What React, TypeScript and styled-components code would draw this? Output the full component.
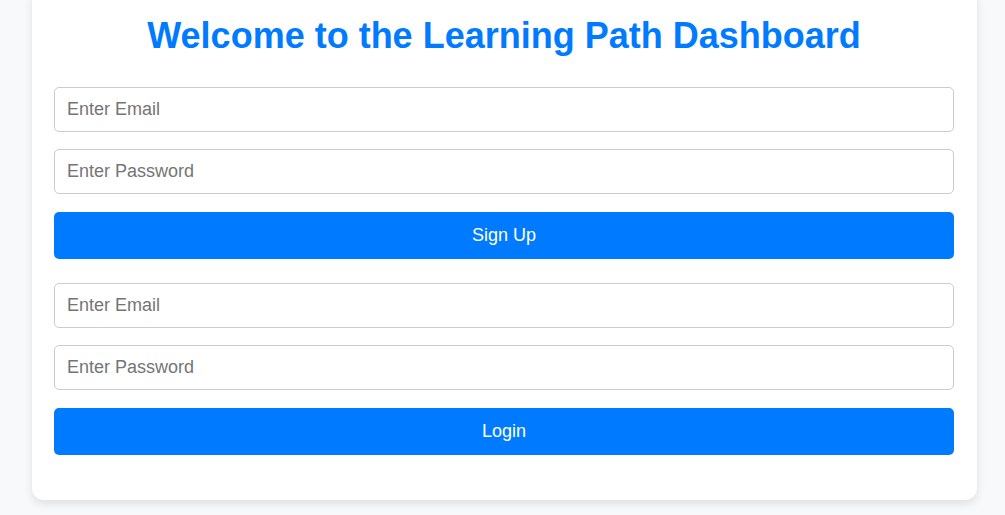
import React from "react";
import styled, { createGlobalStyle } from "styled-components";

const GlobalStyle = createGlobalStyle`
  html, body {
    margin: 0;
    padding: 0;
    background: #f8f9fa;
    font-family: "Liberation Sans", Arial, sans-serif;
  }
`;

const Page = styled.div`
  display: flex;
  justify-content: center;
  padding: 0 28px 0 32px;
  min-height: 515px;
  box-sizing: border-box;
  overflow: hidden;
`;

const Card = styled.div`
  width: 945px;
  box-sizing: border-box;
  margin-top: -12px;
  align-self: flex-start;
  background: #ffffff;
  border-radius: 12px;
  box-shadow: 0 4px 10px rgba(0, 0, 0, 0.1);
  padding: 27px 23px 21px 22px;
`;

const Title = styled.h1`
  margin: 0 0 31px;
  text-align: center;
  color: #007bff;
  font-size: 36px;
  font-weight: bold;
  line-height: 41px;
`;

const Form = styled.form`
  display: flex;
  flex-direction: column;
  gap: 17px;
  margin-bottom: 24px;
`;

const Input = styled.input`
  height: 45px;
  box-sizing: border-box;
  padding: 0 12px;
  border: 1px solid #cccccc;
  border-radius: 5px;
  font-family: "Liberation Sans", Arial, sans-serif;
  font-size: 18px;
  color: #333;
  outline: none;
  &::placeholder {
    color: #757575;
  }
`;

const Button = styled.button`
  height: 47px;
  margin-top: 1px;
  border: none;
  border-radius: 5px;
  background: #007bff;
  color: #ffffff;
  font-family: "Liberation Sans", Arial, sans-serif;
  font-size: 18px;
  cursor: pointer;
`;

function AuthForm({ label }: { label: string }) {
  return (
    <Form onSubmit={(e) => e.preventDefault()}>
      <Input type="email" placeholder="Enter Email" />
      <Input type="password" placeholder="Enter Password" />
      <Button type="submit">{label}</Button>
    </Form>
  );
}

export default function App() {
  return (
    <>
      <GlobalStyle />
      <Page>
        <Card>
          <Title>Welcome to the Learning Path Dashboard</Title>
          <AuthForm label="Sign Up" />
          <AuthForm label="Login" />
        </Card>
      </Page>
    </>
  );
}
